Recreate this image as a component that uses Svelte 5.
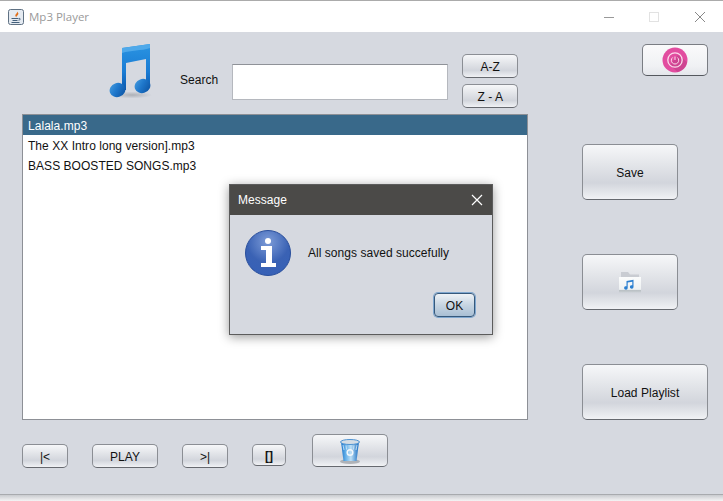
<script lang="ts">
	let songs = ['Lalala.mp3', 'The XX Intro long version].mp3', 'BASS BOOSTED SONGS.mp3'];
	let selected = $state(0);
	let search = $state('');
	let showMessage = $state(true);
</script>

<div class="window">
	<header class="titlebar">
		<svg viewBox="0 0 16 16" width="16" height="16">
			<rect x="0.5" y="0.5" width="15" height="15" rx="2" fill="#e4eaf1" stroke="#5f7183" />
			<path d="M9 2.500c1 1.500-2.500 2.800-1.500 4.800.3.600.8.900 1 1.200-.8-1.500 2.600-2.600 1.800-4.200-.3-.7-.8-1.300-1.300-1.800z" fill="#e2711d" />
			<path d="M3.500 9h7v1h-7zM4.500 11h5v1h-5zM3.500 13h8v1h-8z" fill="#44607c" />
			<path d="M11 9.500c1.500-.5 2 1.300-.5 1.700" fill="none" stroke="#44607c" />
		</svg>
		<span class="title">Mp3 Player</span>
		<div class="controls">
			<svg viewBox="0 0 46 32" width="46" height="32"><path d="M19 16.500h10" stroke="#999" fill="none" /></svg>
			<svg viewBox="0 0 46 32" width="46" height="32"><rect x="18.500" y="11.500" width="9" height="9" fill="none" stroke="#e2e2e2" /></svg>
			<svg viewBox="0 0 46 32" width="46" height="32"><path d="M18 11l10 10M28 11l-10 10" stroke="#888" fill="none" /></svg>
		</div>
	</header>

	<main class="content">
		<section class="left">
			<div class="top">
				<svg class="note" viewBox="0 0 44 56" width="44" height="56">
					<defs>
						<linearGradient id="noteFill" x1="0" y1="0" x2="0" y2="1">
							<stop offset="0" stop-color="#2a94e2" />
							<stop offset="0.6" stop-color="#1a7cd4" />
							<stop offset="1" stop-color="#0a58ae" />
						</linearGradient>
						<linearGradient id="headFill" x1="0" y1="0" x2="1" y2="1">
							<stop offset="0" stop-color="#4aa0e0" />
							<stop offset="0.45" stop-color="#1f78cc" />
							<stop offset="1" stop-color="#0a4f9e" />
						</linearGradient>
						<radialGradient id="noteShade" cx="0.5" cy="0.5" r="0.5">
							<stop offset="0" stop-color="#8c8f95" stop-opacity="0.55" />
							<stop offset="1" stop-color="#8c8f95" stop-opacity="0" />
						</radialGradient>
					</defs>
					<ellipse cx="24" cy="52" rx="20" ry="3.500" fill="url(#noteShade)" />
					<path d="M14 5 42 1V44H38V16L18 20V47H14z" fill="url(#noteFill)" />
					<path d="M14 5 42 1V5C33 8 23 7 14 10z" fill="#4fa9ea" />
					<ellipse cx="9.500" cy="47" rx="8" ry="7" transform="rotate(-20 9.500 47)" fill="url(#headFill)" />
					<ellipse cx="34.500" cy="43" rx="8" ry="7" transform="rotate(-20 34.500 43)" fill="url(#headFill)" />
				</svg>
				<label class="search-label" for="search">Search</label>
				<input id="search" class="search" bind:value={search} />
				<div class="sort">
					<button class="btn sort-btn">A-Z</button>
					<button class="btn sort-btn">Z - A</button>
				</div>
			</div>

			<ul class="songs">
				{#each songs as song, i}
					<li class:selected={i === selected}>
						<button class="song" onclick={() => (selected = i)}>{song}</button>
					</li>
				{/each}
			</ul>

			<div class="transport">
				<button class="btn small prev">|&lt;</button>
				<button class="btn small play">PLAY</button>
				<button class="btn small next">&gt;|</button>
				<button class="btn stop"><b>[]</b></button>
				<button class="btn trash icon-btn" aria-label="Delete">
					<svg viewBox="0 0 22 26" width="22" height="26">
						<defs>
							<linearGradient id="bin" x1="0" y1="0" x2="1" y2="0">
								<stop offset="0" stop-color="#1d74c8" />
								<stop offset="0.25" stop-color="#62aee8" />
								<stop offset="0.55" stop-color="#bfe0f6" />
								<stop offset="1" stop-color="#166cc0" />
							</linearGradient>
						</defs>
						<ellipse cx="11" cy="23.500" rx="10" ry="2.500" fill="#85888e" opacity="0.55" />
						<path d="M2 4h18l-2.500 19h-13z" fill="url(#bin)" />
						<ellipse cx="11" cy="4" rx="9.500" ry="2.500" fill="#d5dde5" stroke="#4f93d2" />
						<path d="M4 7l1 5M7 7.500l.5 4M15 7.500l-.5 4M18 7l-1 5" stroke="#eaf4fb" opacity="0.7" fill="none" />
						<circle cx="11" cy="14.500" r="2.800" fill="none" stroke="#f2f7fb" stroke-width="1.500" />
					</svg>
				</button>
			</div>
		</section>

		<aside class="right">
			<button class="btn power icon-btn" aria-label="Power">
				<svg viewBox="0 0 26 26" width="26" height="26">
					<circle cx="13" cy="13" r="12.500" fill="#e24da0" />
					<path d="M8 18 16 8l9 7a12.500 12.500 0 0 1-9.500 10z" fill="#b5397f" opacity="0.45" />
					<circle cx="13" cy="13" r="7.200" fill="none" stroke="#fbdcec" stroke-width="1.300" />
					<path d="M10.600 10.500a3.700 3.700 0 1 0 4.800 0M13 9.500v3.500" fill="none" stroke="#fbdcec" stroke-width="1" />
				</svg>
			</button>
			<button class="btn side save">Save</button>
			<button class="btn side folder icon-btn" aria-label="Open folder">
				<svg viewBox="0 0 24 21" width="24" height="21">
					<defs>
						<linearGradient id="folderBody" x1="0" y1="0" x2="0" y2="1">
							<stop offset="0" stop-color="#fbfcfc" />
							<stop offset="0.8" stop-color="#eef1f2" />
							<stop offset="0.85" stop-color="#b9c0c4" />
							<stop offset="1" stop-color="#c9ced2" />
						</linearGradient>
					</defs>
					<path d="M3 0h7l2 2.500h9V6H3z" fill="#c9ccd2" />
					<path d="M1 5h22v15.500H1z" fill="url(#folderBody)" />
					<path d="M8.500 9l7-1.200v7.200a1.800 1.800 0 1 1-1.200-1.700V9.800l-4.600.8v5.400a1.800 1.800 0 1 1-1.200-1.700z" fill="#2b7fd0" />
				</svg>
			</button>
			<button class="btn side load">Load Playlist</button>
		</aside>
	</main>
	<div class="edge"></div>

	{#if showMessage}
		<div class="dialog" role="dialog">
			<div class="dialog-title">
				<span>Message</span>
				<button class="dialog-close" aria-label="Close" onclick={() => (showMessage = false)}>
					<svg viewBox="0 0 12 12" width="12" height="12"><path d="M1 1l10 10M11 1L1 11" stroke="#fff" stroke-width="1.200" fill="none" /></svg>
				</button>
			</div>
			<div class="dialog-body">
				<svg viewBox="0 0 46 46" width="46" height="46">
					<defs>
						<radialGradient id="infoFill" cx="0.5" cy="0.25" r="0.85">
							<stop offset="0" stop-color="#7d9cd8" />
							<stop offset="0.55" stop-color="#3a62b4" />
							<stop offset="1" stop-color="#3560b8" />
						</radialGradient>
					</defs>
					<circle cx="23" cy="23" r="22.500" fill="url(#infoFill)" stroke="#2a4f9c" />
					<circle cx="23" cy="11" r="3" fill="#fff" />
					<path d="M16 16h11v17h4v4H16v-4h5V20h-5z" fill="#fff" />
				</svg>
				<span>All songs saved succefully</span>
			</div>
			<div class="dialog-actions">
				<button class="ok" onclick={() => (showMessage = false)}>OK</button>
			</div>
		</div>
	{/if}
</div>

<style>
	.window {
		position: relative;
		width: 723px;
		height: 501px;
		overflow: hidden;
		font-family: 'Liberation Sans', Arial, sans-serif;
		font-size: 12px;
		letter-spacing: 0.04px;
		color: #111;
		background: #fff;
		border-top: 1px solid #ababab;
		box-sizing: border-box;
	}

	.titlebar {
		display: flex;
		align-items: center;
		height: 31px;
		padding-left: 8px;
		background: #fff;
	}

	.title {
		margin-left: 5px;
		font-family: 'Open Sans', sans-serif;
		font-size: 11.5px;
		letter-spacing: 0;
		color: #9a9a9a;
	}

	.controls {
		display: flex;
		margin-left: auto;
	}

	.controls svg {
		display: block;
	}

	.content {
		display: flex;
		height: 462px;
		padding-left: 22px;
		background: #d6d9e0;
		border-bottom: 1px solid #a8aaae;
	}

	.edge {
		height: 6px;
		background: linear-gradient(#c9cbcf, #f4f4f5);
	}

	.left {
		width: 506px;
	}

	.top {
		display: flex;
		align-items: flex-start;
		height: 82px;
	}

	.note {
		margin: 11px 0 0 86px;
	}

	.search-label {
		margin: 41px 0 0 28px;
		line-height: 14px;
	}

	.search {
		width: 216px;
		height: 36px;
		margin: 32px 0 0 14px;
		padding: 0 4px;
		background: #fff;
		border: 1px solid #b5b8be;
		border-top-color: #8f9298;
		box-sizing: border-box;
		font: inherit;
		outline: none;
	}

	.sort {
		display: flex;
		flex-direction: column;
		gap: 6px;
		margin: 22px 0 0 14px;
	}

	.btn {
		display: flex;
		align-items: center;
		justify-content: center;
		padding: 2px 0 0;
		font: inherit;
		letter-spacing: inherit;
		color: #111;
		background: linear-gradient(#f6f7f9 0%, #e4e6ea 35%, #d2d5dc 70%, #e8eaee 92%, #f1f2f5 100%);
		border: 1px solid #8b8e94;
		border-bottom-color: #66696f;
		border-radius: 5px;
		box-sizing: border-box;
	}

	.icon-btn {
		padding: 0;
	}

	.sort-btn {
		width: 56px;
		height: 24px;
	}

	.songs {
		height: 306px;
		margin: 0;
		padding: 0;
		list-style: none;
		background: #fff;
		border: 1px solid #8d9096;
		box-sizing: border-box;
	}

	.song {
		display: block;
		width: 100%;
		height: 20px;
		padding: 2px 0 0 5px;
		font: inherit;
		letter-spacing: inherit;
		color: inherit;
		text-align: left;
		background: none;
		border: 0;
		box-sizing: border-box;
	}

	.selected {
		color: #fff;
		background: #39698a;
	}

	.transport {
		display: flex;
		align-items: flex-start;
		margin-top: 14px;
	}

	.small {
		height: 24px;
		margin-top: 10px;
	}

	.prev,
	.next {
		width: 46px;
		margin-right: 24px;
	}

	.play {
		width: 66px;
		margin-right: 24px;
	}

	.stop {
		width: 34px;
		height: 22px;
		margin: 10px 26px 0 0;
	}

	.trash {
		width: 76px;
		height: 33px;
	}

	.right {
		display: flex;
		flex-direction: column;
		align-items: flex-start;
		margin-left: 54px;
	}

	.power {
		width: 66px;
		height: 32px;
		margin: 12px 0 0 60px;
		background: linear-gradient(#fafafb, #f0f1f4 70%, #e4e6eb);
		border-color: #7a7d83;
		border-bottom-color: #55585e;
	}

	.side {
		height: 56px;
	}

	.save {
		width: 96px;
		margin-top: 68px;
	}

	.folder {
		width: 96px;
		margin-top: 54px;
	}

	.load {
		width: 126px;
		margin-top: 54px;
	}

	.dialog {
		position: absolute;
		left: 229px;
		top: 183px;
		width: 264px;
		height: 151px;
		display: flex;
		flex-direction: column;
		background: #d6d9e0;
		border: 1px solid #5c5c5c;
		box-sizing: border-box;
		box-shadow: 0 2px 10px rgba(0, 0, 0, 0.4);
	}

	.dialog-title {
		display: flex;
		align-items: center;
		justify-content: space-between;
		flex: none;
		height: 30px;
		padding: 0 9px 0 8px;
		color: #fff;
		background: #4b4a48;
	}

	.dialog-close {
		display: flex;
		padding: 0;
		background: none;
		border: 0;
	}

	.dialog-body {
		display: flex;
		align-items: center;
		gap: 17px;
		margin: 15px 0 0 15px;
	}

	.dialog-actions {
		display: flex;
		justify-content: flex-end;
		margin: 17px 17px 0 0;
	}

	.ok {
		width: 41px;
		height: 24px;
		padding: 1px 0 0;
		font: inherit;
		letter-spacing: inherit;
		color: #111;
		background: linear-gradient(#eef2f6, #c7d5e2 50%, #a9bfd4);
		border: 1px solid #36597c;
		border-radius: 4px;
		box-shadow: 0 0 0 1px #7fa7cf;
	}
</style>
